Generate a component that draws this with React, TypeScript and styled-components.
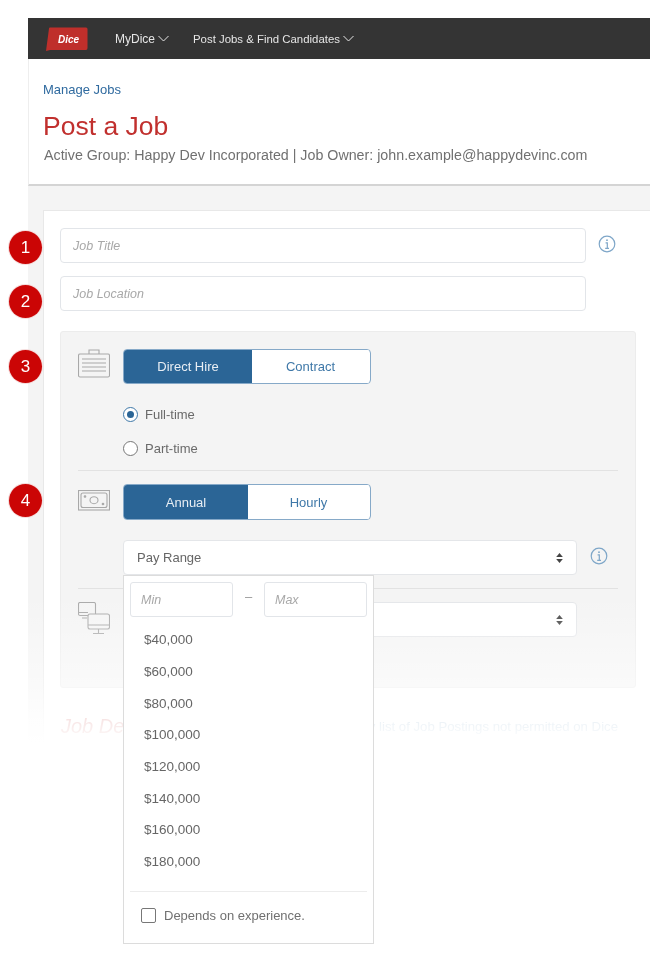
import React from 'react';
import styled, { createGlobalStyle } from 'styled-components';

const GlobalStyle = createGlobalStyle`
    html, body {
        margin: 0;
        padding: 0;
        background: #fff;
    }
    * {
        box-sizing: border-box;
    }
`;

const Page = styled.div`
    position: relative;
    width: 650px;
    height: 953px;
    padding: 18px 0 0 28px;
    overflow: hidden;
    background: #fff;
    font-family: "Liberation Sans", Arial, sans-serif;
    color: #666;
    filter: blur(0.5px);
`;

const NavBar = styled.div`
    display: flex;
    align-items: center;
    height: 41px;
    padding-left: 18px;
    background-color: #343434;
    color: #e6e6e6;
    font-size: 12px;
`;

const NavItem = styled.div<{ $gap: number; $size: number }>`
    display: flex;
    align-items: center;
    gap: 3px;
    margin-left: ${(p) => p.$gap}px;
    font-size: ${(p) => p.$size}px;
`;

const Header = styled.div`
    height: 127px;
    padding: 22px 0 0 14px;
    background: #fff;
    border-left: 1px solid #eee;
    border-bottom: 2px solid #d4d4d4;
`;

const Crumb = styled.a`
    display: block;
    font-size: 13px;
    line-height: 17px;
    color: #2f6a9f;
`;

const Title = styled.h1`
    margin: 11px 0 0;
    font-size: 26.5px;
    line-height: 34px;
    font-weight: 400;
    color: #c1302e;
`;

const Meta = styled.div`
    margin: 2px 0 0 1px;
    font-size: 14.25px;
    line-height: 20px;
    color: #707070;
`;

const Main = styled.div`
    position: relative;
    height: 565px;
    padding: 24px 0 0 15px;
    background: #f4f4f4;
`;

const Fade = styled.div`
    position: absolute;
    left: 0;
    right: 0;
    bottom: 0;
    height: 155px;
    background: linear-gradient(
        to bottom,
        rgba(255, 255, 255, 0),
        rgba(255, 255, 255, 0.52) 55%,
        rgba(255, 255, 255, 0.88) 80%,
        #fff 96%
    );
    pointer-events: none;
`;

const Card = styled.div`
    margin-right: -10px;
    height: 100%;
    padding: 17px 0 0 16px;
    background: #fff;
    border: 1px solid #e8e8e8;
    border-bottom: none;
`;

const FieldRow = styled.div`
    display: flex;
    align-items: center;
    gap: 12px;
    margin-bottom: 13px;
`;

const TextField = styled.div`
    display: flex;
    align-items: center;
    flex: none;
    width: 526px;
    height: 35px;
    padding-left: 12px;
    background: #fff;
    border: 1px solid #e2e5e9;
    border-radius: 4px;
    font-size: 12.5px;
    font-style: italic;
    color: #a8a8a8;
`;

const Panel = styled.div`
    position: relative;
    width: 576px;
    height: 357px;
    margin-top: 20px;
    padding: 17px 17px 0;
    background: #f4f4f4;
    border: 1px solid #ececec;
    border-radius: 3px;
`;

const Section = styled.div<{ $pad: string; $divider?: boolean }>`
    display: flex;
    gap: 13px;
    padding: ${(p) => p.$pad};
    border-bottom: ${(p) => (p.$divider ? '1px solid #e2e2e2' : 'none')};
`;

const IconSlot = styled.div<{ $offset?: number }>`
    flex: none;
    width: 32px;
    padding-top: ${(p) => p.$offset ?? 0}px;
`;

const SectionBody = styled.div`
    flex: 1;
`;

const Toggle = styled.div<{ $height: number }>`
    display: flex;
    width: 248px;
    height: ${(p) => p.$height}px;
    overflow: hidden;
    background: #fff;
    border: 1.5px solid #86a9c8;
    border-radius: 4px;
`;

const ToggleOption = styled.div<{ $active?: boolean; $width: number }>`
    display: flex;
    align-items: center;
    justify-content: center;
    flex: none;
    width: ${(p) => p.$width}px;
    font-size: 13px;
    background: ${(p) => (p.$active ? '#2b6596' : '#fff')};
    color: ${(p) => (p.$active ? '#e8eef4' : '#3f78a8')};
`;

const RadioGroup = styled.div`
    margin-top: 13px;
`;

const RadioRow = styled.label`
    display: flex;
    align-items: center;
    gap: 7px;
    height: 34px;
    font-size: 13px;
    color: #6a6a6a;
`;

const RadioDot = styled.span<{ $checked?: boolean }>`
    display: flex;
    align-items: center;
    justify-content: center;
    width: 15px;
    height: 15px;
    border-radius: 50%;
    border: 1.5px solid ${(p) => (p.$checked ? '#3f78a8' : '#777')};
    background: #fff;

    &::after {
        content: '';
        display: ${(p) => (p.$checked ? 'block' : 'none')};
        width: 7px;
        height: 7px;
        border-radius: 50%;
        background: #2b6596;
    }
`;

const SelectRow = styled.div`
    display: flex;
    align-items: center;
    gap: 13px;
    margin-top: 20px;
`;

const SelectWrap = styled.div`
    position: relative;
    flex: none;
    width: 454px;
`;

const SelectBox = styled.div`
    display: flex;
    align-items: center;
    justify-content: space-between;
    height: 35px;
    padding: 0 13px 0 13px;
    background: #fff;
    border: 1px solid #e4e6e9;
    border-radius: 4px;
    font-size: 13px;
    color: #666;
`;

const Dropdown = styled.div`
    position: absolute;
    z-index: 3;
    top: 100%;
    left: 0;
    width: 251px;
    height: 369px;
    padding: 6px 6px 0;
    background: #fff;
    border: 1px solid #dcdcdc;
`;

const RangeRow = styled.div`
    display: flex;
    align-items: center;
    justify-content: space-between;
`;

const RangeInput = styled.div`
    display: flex;
    align-items: center;
    width: 103px;
    height: 35px;
    padding-left: 10px;
    border: 1px solid #e2e5e9;
    border-radius: 3px;
    font-size: 12.5px;
    font-style: italic;
    color: #a8a8a8;
`;

const RangeDash = styled.span`
    color: #999;
    font-size: 13px;
    margin-top: -6px;
`;

const AmountList = styled.div`
    display: flex;
    flex-direction: column;
    margin-top: 7px;
    padding-left: 14px;
`;

const Amount = styled.div`
    display: flex;
    align-items: center;
    height: 31.7px;
    font-size: 13.5px;
    color: #666;
`;

const DropdownFoot = styled.div`
    display: flex;
    align-items: center;
    gap: 8px;
    height: 49px;
    margin-top: 13px;
    padding-left: 11px;
    border-top: 1px solid #ececec;
    font-size: 13px;
    color: #707070;
`;

const CheckBox = styled.span`
    width: 15px;
    height: 15px;
    background: #fff;
    border: 1.5px solid #777;
    border-radius: 2px;
`;

const DescriptionRow = styled.div`
    display: flex;
    align-items: center;
    justify-content: space-between;
    width: 558px;
    margin-top: 27px;
    padding-left: 1px;
`;

const DescriptionTitle = styled.div`
    font-size: 20px;
    font-style: italic;
    color: #c1302e;
`;

const DescriptionLink = styled.a`
    font-size: 13.2px;
    color: #5f92ba;
`;

const Badge = styled.div<{ $top: number }>`
    position: absolute;
    z-index: 4;
    left: 9px;
    top: ${(p) => p.$top}px;
    display: flex;
    align-items: center;
    justify-content: center;
    width: 33px;
    height: 33px;
    border-radius: 50%;
    background: #cb0505;
    box-shadow: 0 0 0 1px #f5dcdc;
    font-size: 17px;
    color: #fff;
`;

const InfoMark = styled.svg`
    flex: none;
    margin-bottom: 4px;
`;

const Chevron = () => (
    <svg width="11" height="7" viewBox="0 0 11 7" fill="none" stroke="#e6e6e6" strokeWidth="1">
        <path d="M0.5 1L5.5 6L10.5 1" />
    </svg>
);

const Logo = () => (
    <svg width="42" height="24" viewBox="0 0 42 24">
        <path
            d="M3 1.5Q3 0.5 4 0.5H40Q41.5 0.5 41.5 2V21Q41.5 23 40 23H4L0 24Z"
            fill="#bf2f2b"
        />
        <text x="12" y="15.5" fontSize="10" fontWeight="700" fontStyle="italic" fill="#fff">
            Dice
        </text>
    </svg>
);

const InfoIcon = () => (
    <InfoMark width="18" height="18" viewBox="0 0 18 18" fill="none" stroke="#7ea6c8">
        <circle cx="9" cy="9" r="7.8" strokeWidth="1.2" />
        <circle cx="9" cy="5.2" r="0.9" fill="#7ea6c8" stroke="none" />
        <path d="M7.6 7.8H9.3V13M7.2 13.4H11" strokeWidth="1.2" />
    </InfoMark>
);

const SortArrows = () => (
    <svg width="7" height="10" viewBox="0 0 7 10" fill="#444">
        <path d="M3.5 0L6.8 4H0.2Z" />
        <path d="M3.5 10L6.8 6H0.2Z" />
    </svg>
);

const BriefcaseIcon = () => (
    <svg width="32" height="29" viewBox="0 0 32 29" fill="none" stroke="#a8a8a8" strokeWidth="1.1">
        <path d="M11 5V1H21V5" />
        <rect x="0.5" y="5" width="31" height="23" rx="1.5" />
        <path d="M4 10H28M4 14H28M4 18H28M4 22H28" />
    </svg>
);

const MoneyIcon = () => (
    <svg width="32" height="21" viewBox="0 0 32 21" fill="none" stroke="#a8a8a8" strokeWidth="1.1">
        <rect x="0.5" y="0.5" width="31" height="19.5" />
        <rect x="3" y="3" width="26" height="14.5" rx="2" />
        <ellipse cx="16" cy="10.2" rx="4" ry="3.5" />
        <circle cx="7" cy="6.5" r="0.8" fill="#a8a8a8" />
        <circle cx="25" cy="14" r="0.8" fill="#a8a8a8" />
    </svg>
);

const MonitorsIcon = () => (
    <svg width="32" height="33" viewBox="0 0 32 33" fill="none" stroke="#a8a8a8" strokeWidth="1.1">
        <rect x="0.5" y="0.5" width="17" height="13" rx="1.5" />
        <path d="M0.5 10.5H10M4 16H9" />
        <rect x="10" y="12" width="21.5" height="15" rx="2" fill="#f5f5f5" />
        <path d="M10 23H31.5M20.5 27V31M15 31.5H26" />
    </svg>
);

const amounts = ['$40,000', '$60,000', '$80,000', '$100,000', '$120,000', '$140,000', '$160,000', '$180,000'];

const App = () => {
    return (
        <Page>
            <GlobalStyle />
            <NavBar>
                <Logo />
                <NavItem $gap={27} $size={12}>
                    MyDice <Chevron />
                </NavItem>
                <NavItem $gap={24} $size={11.4}>
                    Post Jobs &amp; Find Candidates <Chevron />
                </NavItem>
            </NavBar>
            <Header>
                <Crumb>Manage Jobs</Crumb>
                <Title>Post a Job</Title>
                <Meta>Active Group: Happy Dev Incorporated | Job Owner: john.example@happydevinc.com</Meta>
            </Header>
            <Main>
                <Card>
                    <FieldRow>
                        <TextField>Job Title</TextField>
                        <InfoIcon />
                    </FieldRow>
                    <FieldRow>
                        <TextField>Job Location</TextField>
                    </FieldRow>
                    <Panel>
                        <Section $pad="0 0 5px" $divider>
                            <IconSlot>
                                <BriefcaseIcon />
                            </IconSlot>
                            <SectionBody>
                                <Toggle $height={35}>
                                    <ToggleOption $active $width={128}>Direct Hire</ToggleOption>
                                    <ToggleOption $width={117}>Contract</ToggleOption>
                                </Toggle>
                                <RadioGroup>
                                    <RadioRow>
                                        <RadioDot $checked /> Full-time
                                    </RadioRow>
                                    <RadioRow>
                                        <RadioDot /> Part-time
                                    </RadioRow>
                                </RadioGroup>
                            </SectionBody>
                        </Section>
                        <Section $pad="13px 0" $divider>
                            <IconSlot $offset={6}>
                                <MoneyIcon />
                            </IconSlot>
                            <SectionBody>
                                <Toggle $height={36}>
                                    <ToggleOption $active $width={124}>Annual</ToggleOption>
                                    <ToggleOption $width={121}>Hourly</ToggleOption>
                                </Toggle>
                                <SelectRow>
                                    <SelectWrap>
                                        <SelectBox>
                                            Pay Range <SortArrows />
                                        </SelectBox>
                                        <Dropdown>
                                            <RangeRow>
                                                <RangeInput>Min</RangeInput>
                                                <RangeDash>–</RangeDash>
                                                <RangeInput>Max</RangeInput>
                                            </RangeRow>
                                            <AmountList>
                                                {amounts.map((a) => (
                                                    <Amount key={a}>{a}</Amount>
                                                ))}
                                            </AmountList>
                                            <DropdownFoot>
                                                <CheckBox /> Depends on experience.
                                            </DropdownFoot>
                                        </Dropdown>
                                    </SelectWrap>
                                    <InfoIcon />
                                </SelectRow>
                            </SectionBody>
                        </Section>
                        <Section $pad="13px 0 0">
                            <IconSlot>
                                <MonitorsIcon />
                            </IconSlot>
                            <SectionBody>
                                <SelectWrap>
                                    <SelectBox>
                                        <span />
                                        <SortArrows />
                                    </SelectBox>
                                </SelectWrap>
                            </SectionBody>
                        </Section>
                    </Panel>
                    <DescriptionRow>
                        <DescriptionTitle>Job Description</DescriptionTitle>
                        <DescriptionLink>Summary list of Job Postings not permitted on Dice</DescriptionLink>
                    </DescriptionRow>
                </Card>
                <Fade />
            </Main>
            <Badge $top={231}>1</Badge>
            <Badge $top={285}>2</Badge>
            <Badge $top={350}>3</Badge>
            <Badge $top={484}>4</Badge>
        </Page>
    );
};

export default App;
